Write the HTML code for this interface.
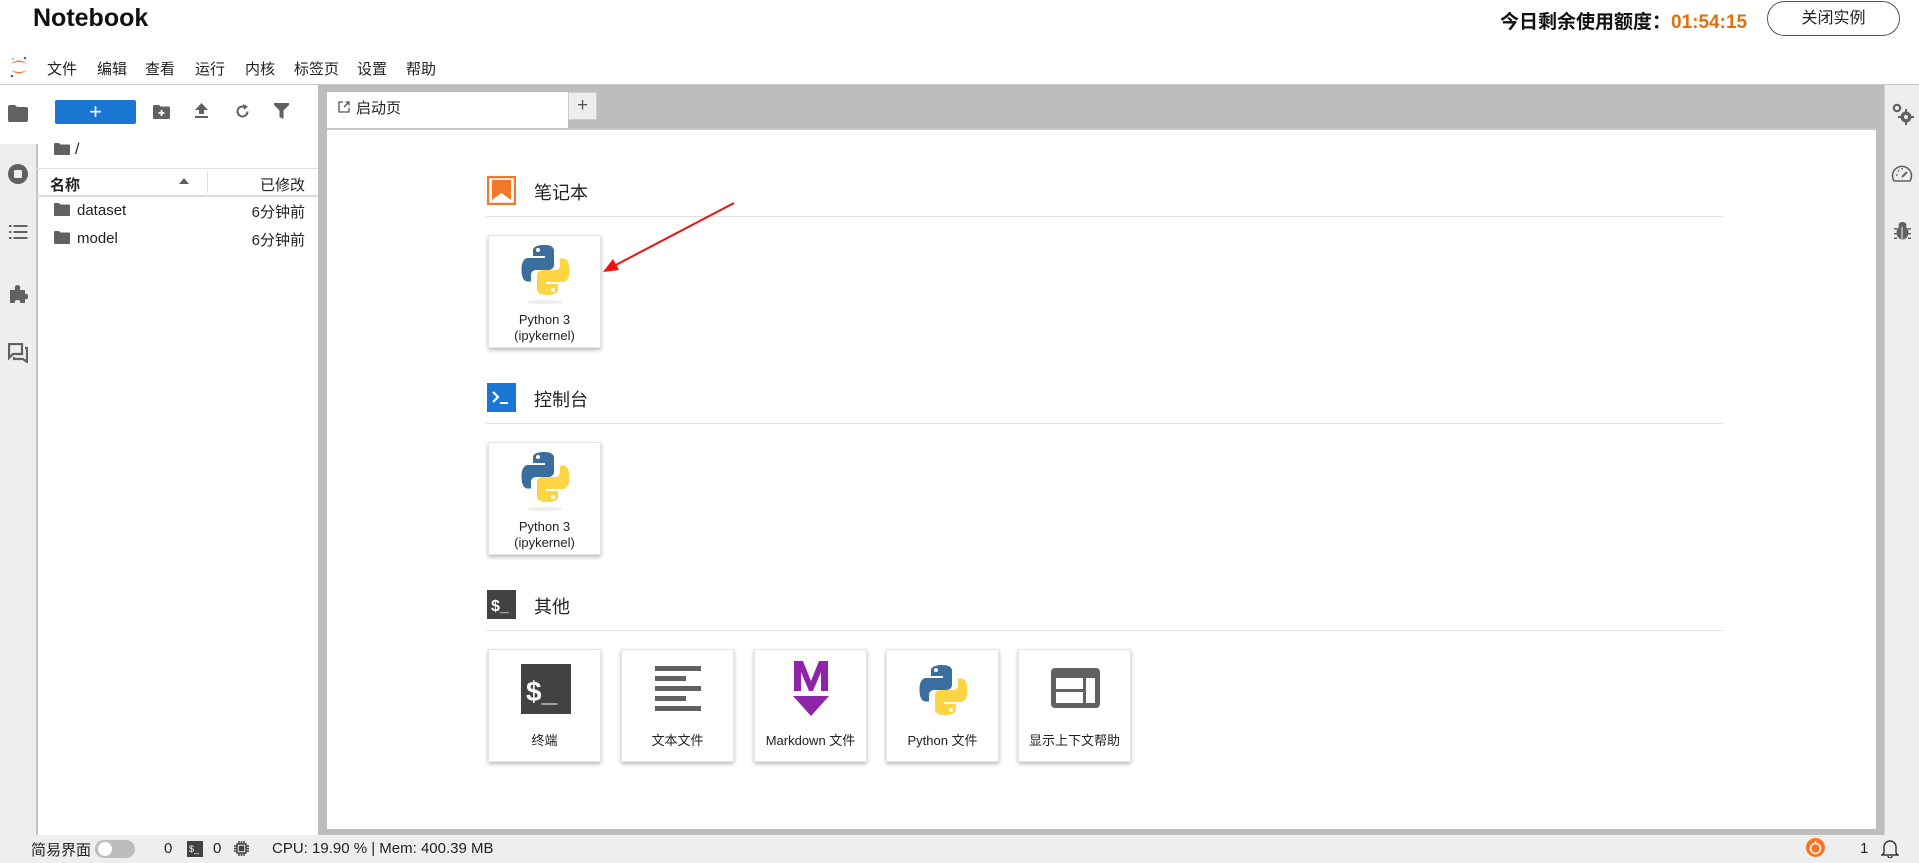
<!DOCTYPE html>
<html><head><meta charset="utf-8">
<style>
*{margin:0;padding:0;box-sizing:border-box}
body{width:1919px;height:863px;overflow:hidden;background:#fff;font-family:"Liberation Sans","Noto Sans CJK SC",sans-serif;color:#000;position:relative}
.a{position:absolute}
.menu span{position:absolute;top:58px;font-size:15px;color:#222}
.sec-t{position:absolute;font-size:18px;color:#222}
.line{position:absolute;left:486px;width:1237px;height:1px;background:#e0e0e0}
.card{position:absolute;width:113px;height:113px;background:#fff;box-shadow:0 2px 4px rgba(0,0,0,.28);border:1px solid #e6e6e6}
.card .lb{position:absolute;left:0;right:0;text-align:center;font-size:13px;color:#222;line-height:16px}
.ic{position:absolute}
</style></head><body>
<div class="a" style="left:33px;top:4px;font-size:25px;font-weight:bold;color:#111">Notebook</div>
<div class="a" style="left:1500px;top:7px;font-size:19px;font-weight:bold;color:#111">今日剩余使用额度：<span style="color:#e0700e">01:54:15</span></div>
<div class="a" style="left:1767px;top:1px;width:133px;height:35px;border:1px solid #555;border-radius:18px;text-align:center;line-height:33px;font-size:16px;color:#222">关闭实例</div>
<svg class="a" style="left:9px;top:55px" width="20" height="24" viewBox="0 0 20 24"><path d="M2 9 Q10 2 18 9 Q10 5 2 9Z" fill="#f37726"/><path d="M2 15 Q10 22 18 15 Q10 19 2 15Z" fill="#f37726"/><circle cx="16" cy="3" r="1.3" fill="#666"/><circle cx="3" cy="21" r="1.3" fill="#666"/><circle cx="4" cy="4" r="0.9" fill="#888"/></svg>
<div class="menu"><span style="left:47px">文件</span><span style="left:97px">编辑</span><span style="left:145px">查看</span><span style="left:195px">运行</span><span style="left:245px">内核</span><span style="left:294px">标签页</span><span style="left:357px">设置</span><span style="left:406px">帮助</span></div>
<div class="a" style="left:0;top:84px;width:1919px;height:752px;background:#bdbdbd"></div>
<div class="a" style="left:0;top:84px;width:1919px;height:1px;background:#c8c8c8"></div>
<div class="a" style="left:0;top:85px;width:37px;height:751px;background:#eee;border-right:1px solid #c8c8c8"></div>
<div class="a" style="left:0;top:85px;width:38px;height:59px;background:#fff"></div>
<svg class="ic" style="left:8px;top:105px" width="20" height="17" viewBox="0 0 20 17"><path d="M0 2 Q0 0 2 0H7L9 2H18Q20 2 20 4V15Q20 17 18 17H2Q0 17 0 15Z" fill="#616161"/></svg>
<svg class="ic" style="left:7px;top:163px" width="22" height="22" viewBox="0 0 22 22"><circle cx="11" cy="11" r="10" fill="#616161"/><rect x="7" y="7" width="8" height="8" rx="1" fill="#eee"/></svg>
<svg class="ic" style="left:9px;top:224px" width="19" height="16" viewBox="0 0 19 16" fill="#616161"><rect x="0" y="1" width="2.5" height="2"/><rect x="4.5" y="1" width="14" height="2"/><rect x="0" y="7" width="2.5" height="2"/><rect x="4.5" y="7" width="14" height="2"/><rect x="0" y="13" width="2.5" height="2"/><rect x="4.5" y="13" width="14" height="2"/></svg>
<svg class="ic" style="left:8px;top:284px" width="20" height="20" viewBox="0 0 20 20"><path d="M2 6H7Q6 1 9.5 1T12 6H17V10Q20 9 20 12.5T17 15V19H12Q13 16 9.5 16T7 19H2Z" fill="#616161"/></svg>
<svg class="ic" style="left:8px;top:343px" width="20" height="20" viewBox="0 0 20 20" fill="none" stroke="#616161" stroke-width="2.2"><path d="M1 1H14V11H5L1 15Z"/><path d="M17 5H19V19L15 16H6V14"/></svg>
<div class="a" style="left:38px;top:85px;width:280px;height:751px;background:#fff"></div>
<div class="a" style="left:55px;top:100px;width:81px;height:24px;background:#1976d2;border-radius:2px;color:#fff;text-align:center;font-size:22px;line-height:23px">+</div>
<svg class="ic" style="left:153px;top:105px" width="17" height="14" viewBox="0 0 17 14"><path d="M0 1.5Q0 0 1.5 0H6L7.5 1.5H15.5Q17 1.5 17 3V12.5Q17 14 15.5 14H1.5Q0 14 0 12.5Z" fill="#616161"/><path d="M8.5 5V11M5.5 8H11.5" stroke="#fff" stroke-width="1.8"/></svg>
<svg class="ic" style="left:195px;top:103px" width="13" height="16" viewBox="0 0 13 16" fill="#616161"><path d="M6.5 0L13 7H9V11H4V7H0Z"/><rect x="0" y="13" width="13" height="2"/></svg>
<svg class="ic" style="left:235px;top:104px" width="15" height="15" viewBox="0 0 15 15"><path d="M12.5 7.5A5 5 0 1 1 9.5 2.9" fill="none" stroke="#616161" stroke-width="2"/><path d="M8 0L13 2.5L9 6Z" fill="#616161"/></svg>
<svg class="ic" style="left:274px;top:103px" width="15" height="16" viewBox="0 0 15 16"><path d="M0 0H15V2L9.5 7.5V16L5.5 14V7.5L0 2Z" fill="#616161"/></svg>
<svg class="ic" style="left:54px;top:143px" width="16" height="12" viewBox="0 0 16 12"><path d="M0 1Q0 0 1 0H5L6.5 1.5H15Q16 1.5 16 2.5V11Q16 12 15 12H1Q0 12 0 11Z" fill="#616161"/></svg>
<div class="a" style="left:75px;top:141px;font-size:16px;color:#222">/</div>
<div class="a" style="left:37px;top:168px;width:281px;height:1px;background:#e0e0e0"></div>
<div class="a" style="left:37px;top:195px;width:281px;height:2px;background:#ddd"></div>
<div class="a" style="left:207px;top:171px;width:1px;height:22px;background:#e0e0e0"></div>
<div class="a" style="left:50px;top:174px;font-size:15px;font-weight:bold;color:#222">名称</div>
<svg class="ic" style="left:179px;top:178px" width="10" height="6" viewBox="0 0 10 6"><path d="M0 6L5 0L10 6Z" fill="#616161"/></svg>
<div class="a" style="left:220px;top:174px;width:85px;text-align:right;font-size:15px;color:#222">已修改</div>
<svg class="ic" style="left:54px;top:203px" width="16" height="13" viewBox="0 0 16 13"><path d="M0 1Q0 0 1 0H5L6.5 1.5H15Q16 1.5 16 2.5V12Q16 13 15 13H1Q0 13 0 12Z" fill="#616161"/></svg>
<div class="a" style="left:77px;top:202px;font-size:15px;color:#222">dataset</div>
<div class="a" style="left:220px;top:201px;width:85px;text-align:right;font-size:15px;color:#222">6分钟前</div>
<svg class="ic" style="left:54px;top:231px" width="16" height="13" viewBox="0 0 16 13"><path d="M0 1Q0 0 1 0H5L6.5 1.5H15Q16 1.5 16 2.5V12Q16 13 15 13H1Q0 13 0 12Z" fill="#616161"/></svg>
<div class="a" style="left:77px;top:230px;font-size:15px;color:#222">model</div>
<div class="a" style="left:220px;top:229px;width:85px;text-align:right;font-size:15px;color:#222">6分钟前</div>
<div class="a" style="left:327px;top:92px;width:241px;height:36px;background:#fff"></div>
<svg class="ic" style="left:338px;top:101px" width="12" height="12" viewBox="0 0 12 12" fill="none" stroke="#555" stroke-width="1.3"><path d="M5 1H1V11H11V7"/><path d="M6 6L11 1M7.5 1H11V4.5"/></svg>
<div class="a" style="left:356px;top:97px;font-size:15px;color:#222">启动页</div>
<div class="a" style="left:568px;top:92px;width:29px;height:28px;background:#eee;border:1px solid #ccc;text-align:center;font-size:19px;line-height:25px;color:#555">+</div>
<div class="a" style="left:327px;top:128px;width:1549px;height:701px;background:#fff;border-top:2px solid #c8c8c8"></div>
<div class="a" style="left:1884px;top:85px;width:35px;height:751px;background:#eee;border-left:1px solid #d0d0d0"></div>
<svg class="ic" style="left:1892px;top:103px" width="22" height="22" viewBox="0 0 22 22" fill="#616161"><circle cx="5" cy="5" r="3.2" fill="none" stroke="#616161" stroke-width="2.2"/><circle cx="14" cy="14" r="5.5"/><circle cx="14" cy="14" r="2" fill="#eee"/><path d="M13 6h2v3h-2zM13 19h2v3h-2zM6 13h3v2H6zM19 13h3v2h-3z"/></svg>
<svg class="ic" style="left:1891px;top:164px" width="22" height="20" viewBox="0 0 22 20" fill="none" stroke="#616161" stroke-width="1.6"><path d="M3 17A9.5 9.5 0 1 1 19 17Z"/><path d="M11 13L16 8" stroke-width="2"/><path d="M5 11h1.5M11 4v1.5M7 6.5l1 1"/></svg>
<svg class="ic" style="left:1894px;top:221px" width="17" height="19" viewBox="0 0 17 19" fill="#616161"><ellipse cx="8.5" cy="11.5" rx="6" ry="7"/><ellipse cx="8.5" cy="4" rx="4" ry="3"/><path d="M0 7h3v1.5H0zM14 7h3v1.5h-3zM0 12h3v1.5H0zM14 12h3v1.5h-3zM0 16.5h3V18H0zM14 16.5h3V18h-3z"/><path d="M8 6v12" stroke="#eee" stroke-width="1"/></svg>
<svg class="ic" style="left:487px;top:176px" width="29" height="29" viewBox="0 0 29 29"><rect x="1" y="1" width="27" height="27" fill="#fff" stroke="#f37726" stroke-width="2.4"/><path d="M5 4H24V24L14.5 17L5 24Z" fill="#f37726"/></svg>
<div class="sec-t" style="left:534px;top:179px">笔记本</div>
<div class="line" style="top:216px"></div>
<svg class="ic" style="left:487px;top:383px" width="29" height="29" viewBox="0 0 29 29"><rect width="29" height="29" fill="#1976d2"/><path d="M6 9L11 14L6 19" fill="none" stroke="#fff" stroke-width="2.2"/><rect x="13" y="19" width="8" height="2" fill="#fff"/></svg>
<div class="sec-t" style="left:534px;top:386px">控制台</div>
<div class="line" style="top:423px"></div>
<svg class="ic" style="left:487px;top:590px" width="29" height="29" viewBox="0 0 29 29"><rect width="29" height="29" fill="#424242"/><text x="4" y="21" font-family="Liberation Sans" font-weight="bold" font-size="16" fill="#fff">$_</text></svg>
<div class="sec-t" style="left:534px;top:593px">其他</div>
<div class="line" style="top:630px"></div>
<svg width="0" height="0" style="position:absolute"><defs>
<g id="py"><path d="M49 2C24 2 26 13 26 13V24H50V28H16S3 27 3 51S14 75 14 75H22V63S21 52 33 52H57S68 52 68 41V14S70 2 49 2Z" fill="#3a6e9f"/><circle cx="36" cy="12" r="4" fill="#fff"/><g transform="rotate(180 51 52)"><path d="M49 2C24 2 26 13 26 13V24H50V28H16S3 27 3 51S14 75 14 75H22V63S21 52 33 52H57S68 52 68 41V14S70 2 49 2Z" fill="#fcd544"/><circle cx="36" cy="12" r="4" fill="#fff"/></g></g>
</defs></svg>
<div class="card" style="left:488px;top:235px"><svg class="ic" style="left:31px;top:8px" width="51" height="52" viewBox="0 0 102 104"><use href="#py"/></svg><div class="ic" style="left:38px;top:64px;width:36px;height:4px;border-radius:50%;background:#eee"></div><div class="lb" style="top:76px">Python 3<br>(ipykernel)</div></div>
<div class="card" style="left:488px;top:442px"><svg class="ic" style="left:31px;top:8px" width="51" height="52" viewBox="0 0 102 104"><use href="#py"/></svg><div class="ic" style="left:38px;top:64px;width:36px;height:4px;border-radius:50%;background:#eee"></div><div class="lb" style="top:76px">Python 3<br>(ipykernel)</div></div>
<div class="card" style="left:488px;top:649px"><svg class="ic" style="left:32px;top:14px" width="50" height="50" viewBox="0 0 50 50"><rect width="50" height="50" fill="#424242"/><text x="5" y="37" font-family="Liberation Sans" font-weight="bold" font-size="28" fill="#fff">$_</text></svg><div class="lb" style="top:83px">终端</div></div>
<div class="card" style="left:621px;top:649px"><svg class="ic" style="left:33px;top:16px" width="46" height="46" viewBox="0 0 46 46" fill="#616161"><rect x="0" y="0" width="46" height="5"/><rect x="0" y="10" width="31" height="5"/><rect x="0" y="20" width="46" height="5"/><rect x="0" y="30" width="31" height="5"/><rect x="0" y="40" width="46" height="5"/></svg><div class="lb" style="top:83px">文本文件</div></div>
<div class="card" style="left:754px;top:649px"><svg class="ic" style="left:38px;top:11px" width="36" height="55" viewBox="0 0 36 55" fill="#8e24aa"><path d="M1 0H10L18 20L26 0H35V30H28V11L20 30H16L8 11V30H1Z"/><path d="M0 35H36L18 55Z"/></svg><div class="lb" style="top:83px">Markdown 文件</div></div>
<div class="card" style="left:886px;top:649px"><svg class="ic" style="left:31px;top:14px" width="51" height="52" viewBox="0 0 102 104"><use href="#py"/></svg><div class="lb" style="top:83px">Python 文件</div></div>
<div class="card" style="left:1018px;top:649px"><svg class="ic" style="left:32px;top:18px" width="49" height="40" viewBox="0 0 49 40"><rect width="49" height="40" rx="4" fill="#616161"/><rect x="5" y="10" width="27" height="11" fill="#fff"/><rect x="5" y="24" width="27" height="11" fill="#fff"/><rect x="35" y="10" width="9" height="25" fill="#fff"/></svg><div class="lb" style="top:83px">显示上下文帮助</div></div>
<svg class="a" style="left:590px;top:195px" width="150" height="90" viewBox="590 195 150 90"><line x1="734" y1="203" x2="612" y2="267" stroke="#ee1111" stroke-width="2"/><path d="M603 272L613 259L619 270Z" fill="#ee1111"/></svg>
<div class="a" style="left:0;top:835px;width:1919px;height:28px;background:#eee"></div>
<div class="a" style="left:31px;top:839px;font-size:15px;color:#222">简易界面</div>
<div class="a" style="left:95px;top:840px;width:40px;height:18px;border-radius:9px;background:#bdbdbd"></div>
<div class="a" style="left:98px;top:842px;width:14px;height:14px;border-radius:7px;background:#fff"></div>
<div class="a" style="left:164px;top:840px;font-size:15px;color:#222">0</div>
<div class="a" style="left:187px;top:841px;width:16px;height:16px;background:#424242;color:#fff;font-size:9px;line-height:16px;padding-left:2px">$_</div>
<div class="a" style="left:213px;top:840px;font-size:15px;color:#222">0</div>
<svg class="ic" style="left:234px;top:841px" width="15" height="15" viewBox="0 0 15 15" fill="none" stroke="#424242" stroke-width="1.5"><rect x="3" y="3" width="9" height="9"/><rect x="5.5" y="5.5" width="4" height="4" fill="#424242"/><path d="M5 0v3M7.5 0v3M10 0v3M5 12v3M7.5 12v3M10 12v3M0 5h3M0 7.5h3M0 10h3M12 5h3M12 7.5h3M12 10h3"/></svg>
<div class="a" style="left:272px;top:840px;font-size:15px;color:#222">CPU: 19.90 % | Mem: 400.39 MB</div>
<svg class="ic" style="left:1806px;top:838px" width="19" height="19" viewBox="0 0 19 19"><circle cx="9.5" cy="9.5" r="9.5" fill="#f37726"/><circle cx="9.5" cy="10.5" r="5" fill="none" stroke="#fff" stroke-width="1.4"/><path d="M9.5 3V5.5" stroke="#fff" stroke-width="1.4"/></svg>
<div class="a" style="left:1860px;top:840px;font-size:15px;color:#222">1</div>
<svg class="ic" style="left:1881px;top:838px" width="18" height="20" viewBox="0 0 18 20" fill="none" stroke="#333" stroke-width="1.4"><path d="M3 15V9A6 6 0 0 1 15 9V15L17 17H1Z"/><path d="M7 18A2 2 0 0 0 11 18"/></svg>
</body></html>
